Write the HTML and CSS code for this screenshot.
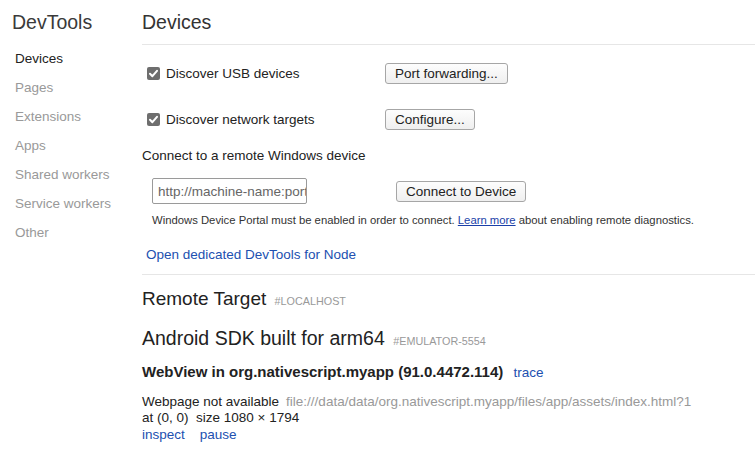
FILE: index.html
```html
<!DOCTYPE html>
<html>
<head>
<meta charset="utf-8">
<link rel="stylesheet" href="styles.css">
</head>
<body>
<div class="page">
  <nav class="sidebar">
    <div class="brand">DevTools</div>
    <ul class="nav">
      <li class="nav-item active">Devices</li>
      <li class="nav-item">Pages</li>
      <li class="nav-item">Extensions</li>
      <li class="nav-item">Apps</li>
      <li class="nav-item">Shared workers</li>
      <li class="nav-item">Service workers</li>
      <li class="nav-item">Other</li>
    </ul>
  </nav>
  <main class="main">
    <header class="header">Devices</header>
    <div class="opt-row">
      <label class="opt"><span class="cb"><svg viewBox="0 0 13 13" width="13" height="13"><path d="M3 6.8 L5.4 9.2 L10 3.8" fill="none" stroke="#fff" stroke-width="2" stroke-linecap="round" stroke-linejoin="round"/></svg></span>Discover USB devices</label>
      <button class="btn">Port forwarding...</button>
    </div>
    <div class="opt-row">
      <label class="opt"><span class="cb"><svg viewBox="0 0 13 13" width="13" height="13"><path d="M3 6.8 L5.4 9.2 L10 3.8" fill="none" stroke="#fff" stroke-width="2" stroke-linecap="round" stroke-linejoin="round"/></svg></span>Discover network targets</label>
      <button class="btn">Configure...</button>
    </div>
    <div class="connect-title">Connect to a remote Windows device</div>
    <div class="connect-row">
      <input class="field" type="text" placeholder="http://machine-name:port">
      <button class="btn">Connect to Device</button>
    </div>
    <div class="note">Windows Device Portal must be enabled in order to connect. <a class="note-link" href="#">Learn more</a> about enabling remote diagnostics.</div>
    <div class="node-link">Open dedicated DevTools for Node</div>
    <section class="targets">
      <h2 class="target-title">Remote Target <span class="tag">#LOCALHOST</span></h2>
      <h3 class="device-title">Android SDK built for arm64 <span class="tag">#EMULATOR-5554</span></h3>
      <div class="browser">WebView in org.nativescript.myapp (91.0.4472.114) <span class="action">trace</span></div>
      <div class="page-item">
        <div class="line"><span class="page-name">Webpage not available</span><span class="url">file:///data/data/org.nativescript.myapp/files/app/assets/index.html?1</span></div>
        <div class="line">at (0, 0)&nbsp; size 1080 × 1794</div>
        <div class="actions"><span class="action">inspect</span><span class="action">pause</span></div>
      </div>
    </section>
  </main>
</div>
</body>
</html>
```
FILE: styles.css
```css
html, body {
  margin: 0;
  padding: 0;
  background: #fff;
}
body {
  font-family: "Liberation Sans", Arial, sans-serif;
  color: #222;
  font-size: 13.5px;
  overflow: hidden;
}
.page {
  display: grid;
  grid-template-columns: 142px 1fr;
  height: 467px;
}
.sidebar {
  padding-top: 10px;
}
.brand {
  padding-left: 12px;
  font-size: 19.5px;
  line-height: 24px;
  color: #3a3a3a;
}
.nav {
  list-style: none;
  margin: 10px 0 0 0;
  padding: 0 0 0 15px;
}
.nav-item {
  line-height: 29px;
  font-size: 13.5px;
  color: #999;
}
.nav-item.active {
  color: #222;
}
.main {
  display: flex;
  flex-direction: column;
  align-items: flex-start;
}
.header {
  align-self: stretch;
  box-sizing: border-box;
  height: 45px;
  padding-top: 10px;
  font-size: 19.5px;
  line-height: 24px;
  color: #333;
  border-bottom: 1px solid #e6e6e6;
}
.opt-row {
  display: flex;
  align-items: center;
  height: 46px;
  padding-left: 5px;
}
.header + .opt-row {
  margin-top: 5px;
}
.opt {
  display: flex;
  align-items: center;
  width: 238px;
  color: #222;
}
.cb {
  width: 13px;
  height: 13px;
  border-radius: 2px;
  background: #6e6e6e;
  margin-right: 6px;
  display: flex;
}
.btn {
  font-family: "Liberation Sans", Arial, sans-serif;
  font-size: 13.5px;
  color: #222;
  height: 21px;
  padding: 0 9px;
  background: linear-gradient(#fdfdfd, #efefef);
  border: 1px solid #a6a6a6;
  border-radius: 3px;
  line-height: 19px;
}
.connect-title {
  margin-top: 5px;
  line-height: 18px;
  color: #222;
}
.connect-row {
  display: flex;
  align-items: center;
  height: 28px;
  margin-top: 12px;
  padding-left: 10px;
}
.field {
  box-sizing: border-box;
  width: 155px;
  height: 26px;
  border: 1px solid #9a9a9a;
  border-radius: 2px;
  padding: 0 0 0 5px;
  font-family: "Liberation Sans", Arial, sans-serif;
  font-size: 13.5px;
  color: #555;
  margin-right: 89px;
}
.field::placeholder {
  color: #666;
}
.note {
  margin-top: 8px;
  padding-left: 10px;
  font-size: 11.3px;
  line-height: 14px;
  color: #333;
}
.note-link {
  color: #1a3fa8;
  text-decoration: underline;
}
.node-link {
  margin-top: 19px;
  padding-left: 4px;
  line-height: 18px;
  color: #2150b0;
}
.targets {
  align-self: stretch;
  margin-top: 10px;
  border-top: 1px solid #e6e6e6;
}
.target-title {
  margin: 13px 0 0 0;
  font-size: 19px;
  line-height: 22px;
  font-weight: normal;
  color: #222;
}
.device-title {
  margin: 14px 0 0 0;
  font-size: 19.5px;
  line-height: 24px;
  font-weight: normal;
  color: #222;
}
.tag {
  font-size: 10.8px;
  color: #999;
  margin-left: 3px;
}
.browser {
  margin-top: 10px;
  line-height: 18px;
  font-weight: bold;
  font-size: 15px;
  color: #222;
}
.browser .action {
  font-weight: normal;
  font-size: 13.5px;
  margin-left: 6px;
}
.action {
  color: #2150b0;
}
.page-item {
  margin-top: 12px;
}
.line {
  line-height: 16px;
}
.url {
  color: #999;
  margin-left: 7px;
}
.actions {
  display: flex;
  gap: 15px;
  line-height: 18px;
}
```
